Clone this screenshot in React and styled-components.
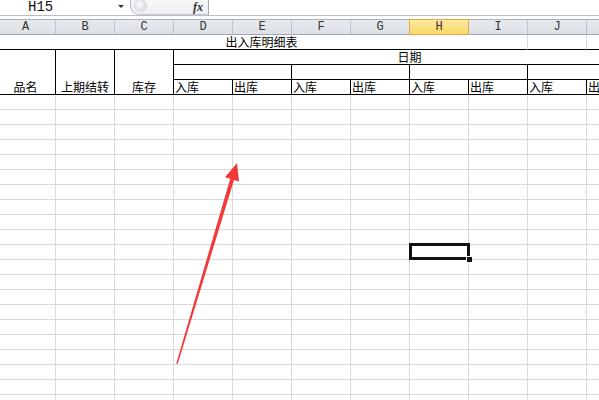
import React from "react";
import styled, { createGlobalStyle } from "styled-components";

const COLS = ["A", "B", "C", "D", "E", "F", "G", "H", "I", "J", "K"];
const GRID = "#dadada";
const INK = "#000";

function App() {
  const bodyRows = [];
  for (let r = 5; r <= 25; r++) bodyRows.push(r);

  return (
    <Window>
      <GlobalStyle />
      <FormulaBar>
        <NameBox>H15</NameBox>
        <DropArrow />
        <FxBox>
          <Knob />
          <Fx>fx</Fx>
        </FxBox>
        <FormulaInput />
      </FormulaBar>

      <Sheet>
        {COLS.map((c) => (
          <ColHead key={c} $active={c === "H"}>
            {c}
          </ColHead>
        ))}

        {/* row 1 */}
        <Cell $cols={9} $h="center" $bb={INK}>
          出入库明细表
        </Cell>
        <Cell $bb={INK} />
        <Cell $bb={INK} />

        {/* rows 2-4 */}
        <Cell $rows={3} $h="center" $rb={INK} $bb={INK}>
          品名
        </Cell>
        <Cell $rows={3} $h="center" $rb={INK} $bb={INK}>
          上期结转
        </Cell>
        <Cell $rows={3} $h="center" $rb={INK} $bb={INK}>
          库存
        </Cell>
        <Cell $cols={8} $h="center" $rb={INK} $bb={INK}>
          日期
        </Cell>
        {[0, 1, 2, 3].map((i) => (
          <Cell key={"m" + i} $cols={2} $rb={INK} $bb={INK} />
        ))}
        {[0, 1, 2, 3, 4, 5, 6, 7].map((i) => (
          <Cell key={"io" + i} $rb={INK} $bb={INK} $pad>
            {i % 2 === 0 ? "入库" : "出库"}
          </Cell>
        ))}

        {bodyRows.map((r) =>
          COLS.map((c) => (
            <Cell key={c + r}>
              {r === 15 && c === "H" && (
                <Selection>
                  <Handle />
                </Selection>
              )}
            </Cell>
          ))
        )}
      </Sheet>

      <Arrow width="599" height="400" viewBox="0 0 599 400">
        <polygon
          points="237,163 239,181.5 234,180 177.7,364 176.3,363.6 230.2,178.7 225,177.2"
          fill="#f23838"
        />
      </Arrow>
    </Window>
  );
}

export default App;

const GlobalStyle = createGlobalStyle`
  html, body {
    margin: 0;
    padding: 0;
    background: #fff;
    overflow: hidden;
  }
  body {
    font-family: "Noto Sans CJK SC", "Liberation Sans", sans-serif;
  }
`;

const Window = styled.div`
  position: relative;
  width: 599px;
  height: 400px;
  overflow: hidden;
  background: #fff;
`;

const FormulaBar = styled.div`
  display: flex;
  height: 15px;
  border-bottom: 1px solid #b9bec5;
  margin-bottom: 3px;
`;

const NameBox = styled.div`
  width: 116px;
  box-sizing: border-box;
  padding-left: 28px;
  font-family: "Liberation Mono", "DejaVu Sans Mono", monospace;
  font-size: 14px;
  line-height: 14px;
  color: #111;
`;

const DropArrow = styled.div`
  width: 0;
  height: 0;
  margin-top: 5px;
  margin-left: 2px;
  border-left: 3px solid transparent;
  border-right: 3px solid transparent;
  border-top: 3px solid #333;
`;

const FxBox = styled.div`
  margin-left: 6px;
  width: 78px;
  height: 15px;
  box-sizing: border-box;
  border-left: 1px solid #b4b9c0;
  border-bottom: 1px solid #c4c8ce;
  border-radius: 0 0 0 9px;
  background: linear-gradient(#f7f8fa, #eceef1);
  display: flex;
  align-items: center;
`;

const Knob = styled.div`
  width: 11px;
  height: 11px;
  margin-left: 3px;
  margin-top: -4px;
  border-radius: 50%;
  background: radial-gradient(circle at 40% 40%, #fafafa, #cfd3d8);
  border: 1px solid #d5d8dc;
`;

const Fx = styled.span`
  margin-left: auto;
  margin-right: 5px;
  font-family: "Liberation Serif", serif;
  font-style: italic;
  font-weight: bold;
  font-size: 12px;
  line-height: 14px;
  color: #333;
`;

const FormulaInput = styled.div`
  flex: 1;
  border-left: 1px solid #a3a9b1;
  background: #fff;
`;

const Sheet = styled.div`
  display: grid;
  grid-template-columns: 60px repeat(10, 59px);
  grid-template-rows: 16px;
  grid-auto-rows: 15px;
  width: 650px;
  margin-left: -4px;
`;

const ColHead = styled.div`
  position: relative;
  box-sizing: border-box;
  border-top: 1px solid ${(p) => (p.$active ? "#e2a64a" : "#a9b1bb")};
  border-bottom: 1px solid ${(p) => (p.$active ? "#e2a64a" : "#9ea6b0")};
  border-right: 1px solid ${(p) => (p.$active ? "#e2a64a" : "#bfc4cb")};
  box-shadow: ${(p) => (p.$active ? "-1px 0 0 #e2a64a" : "none")};
  background: ${(p) =>
    p.$active
      ? "linear-gradient(#fde9a0, #f9d867)"
      : "linear-gradient(#e6e9ee, #dde1e6)"};
  display: flex;
  align-items: center;
  justify-content: center;
  font-family: "Liberation Mono", "DejaVu Sans Mono", monospace;
  font-size: 12px;
  color: #333;
`;

const Cell = styled.div`
  position: relative;
  box-sizing: border-box;
  grid-column: span ${(p) => p.$cols || 1};
  grid-row: span ${(p) => p.$rows || 1};
  border-right: 1px solid ${(p) => p.$rb || GRID};
  border-bottom: 1px solid ${(p) => p.$bb || GRID};
  display: flex;
  align-items: flex-end;
  justify-content: ${(p) => p.$h || "flex-start"};
  padding-left: ${(p) => (p.$pad ? "1px" : "0")};
  font-size: 12px;
  line-height: 14px;
  color: #000;
  white-space: nowrap;
`;

const Selection = styled.div`
  position: absolute;
  left: -1px;
  top: -2px;
  right: -2px;
  bottom: -1px;
  border: 3px solid #111;
  z-index: 2;
`;

const Handle = styled.div`
  position: absolute;
  right: -5px;
  bottom: -5px;
  width: 5px;
  height: 5px;
  background: #111;
  border-left: 1px solid #fff;
  border-top: 1px solid #fff;
`;

const Arrow = styled.svg`
  position: absolute;
  left: 0;
  top: 0;
  pointer-events: none;
  z-index: 3;
`;
